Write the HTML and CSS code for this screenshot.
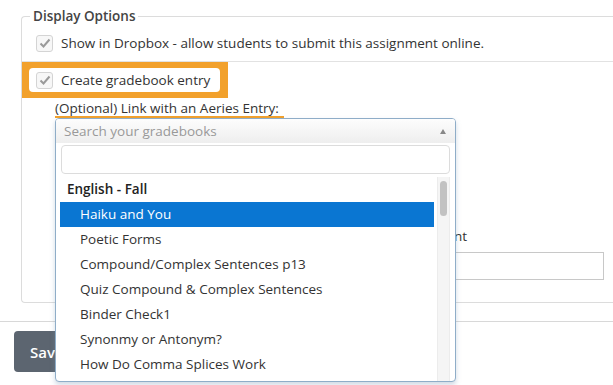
FILE: index.html
```html
<!DOCTYPE html>
<html lang="en">

<head>
  <meta charset="utf-8">
  <title>Display Options</title>
  <link rel="stylesheet" href="styles.css">
</head>

<body>
  <div class="page">
    <fieldset class="options">
      <legend>Display Options</legend>
      <div class="row row-dropbox">
        <span class="check"><svg width="12" height="10" viewBox="0 0 12 10"><path d="M1.5 5.5 L4.5 8.5 L10.5 1.5" fill="none" stroke="#9a9a9a" stroke-width="2"/></svg></span>
        <span>Show in Dropbox - allow students to submit this assignment online.</span>
      </div>
      <div class="highlight">
        <div class="highlight-inner">
          <span class="check"><svg width="12" height="10" viewBox="0 0 12 10"><path d="M1.5 5.5 L4.5 8.5 L10.5 1.5" fill="none" stroke="#9a9a9a" stroke-width="2"/></svg></span>
          <span>Create gradebook entry</span>
        </div>
      </div>
      <div class="link-label"><span>(Optional) Link with an Aeries Entry:</span></div>
      <div class="hidden-row">
        <div class="hidden-label">Display in Aeries as an assignment</div>
        <div class="hidden-input"></div>
      </div>
    </fieldset>
    <div class="footer">
      <button class="save">Save</button>
    </div>

    <div class="dropdown">
      <div class="dropdown-head">
        <span>Search your gradebooks</span>
        <span class="arrow"></span>
      </div>
      <div class="search"></div>
      <div class="list">
        <ul class="items">
          <li class="group">English - Fall</li>
          <li class="item active">Haiku and You</li>
          <li class="item">Poetic Forms</li>
          <li class="item">Compound/Complex Sentences p13</li>
          <li class="item">Quiz Compound &amp; Complex Sentences</li>
          <li class="item">Binder Check1</li>
          <li class="item">Synonmy or Antonym?</li>
          <li class="item">How Do Comma Splices Work</li>
        </ul>
        <div class="scroll"><div class="thumb"></div></div>
      </div>
    </div>
  </div>
</body>

</html>
```

FILE: styles.css
```css
html {
  font-family: 'Open Sans', 'Liberation Sans', sans-serif;
  font-size: 13.5px;
  color: #333;
}

body {
  margin: 0;
  background: #fff;
  overflow: hidden;
}

.page {
  position: relative;
  width: 613px;
  height: 385px;
  padding-top: 7px;
  box-sizing: border-box;
}

.options {
  margin: 0 0 0 21px;
  padding: 0;
  border: 1px solid #dcdcdc;
  border-right: none;
  border-radius: 4px 0 0 4px;
  height: 296px;
  box-sizing: border-box;
  min-width: 0;
}

.options legend {
  margin-left: 8px;
  padding: 0 3px;
  font-weight: 600;
  line-height: 18px;
  color: #444;
}

.row {
  display: flex;
  align-items: center;
}

.row-dropbox {
  height: 36px;
  padding-left: 14px;
  border-bottom: 1px solid #e2e2e2;
}

.check {
  width: 15px;
  height: 15px;
  border: 1px solid #d4d4d4;
  border-radius: 3px;
  background: #f7f7f7;
  display: inline-flex;
  align-items: center;
  justify-content: center;
  margin-right: 8px;
  flex-shrink: 0;
}

.highlight {
  width: 206px;
  height: 36px;
  background: #f2a12c;
  padding: 6px 8px 6px 7px;
  box-sizing: border-box;
}

.highlight-inner {
  height: 24px;
  background: #fff;
  border-radius: 4px;
  display: flex;
  align-items: center;
  padding-left: 7px;
}

.link-label {
  display: flex;
  align-items: flex-start;
  padding: 3px 0 0 33px;
  height: 20px;
}

.link-label span {
  line-height: 15px;
  padding-right: 5px;
  border-bottom: 2px solid #f2a12c;
}

.hidden-row {
  margin-top: 106px;
}

.hidden-label {
  width: 445px;
  text-align: right;
  line-height: 18px;
}

.hidden-input {
  margin: 7px 0 0 433px;
  width: 149px;
  height: 28px;
  border: 1px solid #c8c8c8;
  box-sizing: border-box;
}

.footer {
  margin-top: 18px;
  border-top: 1px solid #d8d8d8;
  padding: 9px 0 0 14px;
}

.save {
  font-family: inherit;
  font-size: 15px;
  font-weight: 600;
  color: #fff;
  background: #5c6570;
  border: none;
  border-radius: 4px;
  height: 41px;
  padding: 0 16px;
}

.dropdown {
  position: absolute;
  left: 55px;
  top: 118px;
  width: 401px;
  height: 264px;
  box-sizing: border-box;
  border: 1px solid #8fadc8;
  border-radius: 4px;
  background: #fff;
  box-shadow: 0 3px 5px rgba(120, 150, 180, 0.35);
  overflow: hidden;
}

.dropdown-head {
  height: 24px;
  display: flex;
  align-items: center;
  justify-content: space-between;
  padding: 0 8px 0 8px;
  color: #999;
  background: linear-gradient(#fdfdfd, #eeeeee);
}

.arrow {
  width: 0;
  height: 0;
  border-left: 3px solid transparent;
  border-right: 3px solid transparent;
  border-bottom: 5px solid #888;
  margin-right: 1px;
}

.search {
  margin: 2px 5px 0 5px;
  height: 27px;
  border: 1px solid #dcdcdc;
  border-radius: 4px;
}

.list {
  display: flex;
  margin: 3px 5px 0 4px;
  height: 210px;
}

.items {
  flex: 1;
  list-style: none;
  margin: 0;
  padding: 0;
}

.items li {
  height: 25px;
  line-height: 25px;
  white-space: nowrap;
}

.group {
  font-weight: 600;
  padding-left: 7px;
  color: #222;
}

.item {
  padding-left: 20px;
  margin-right: 3px;
}

.item.active {
  background: #0a76d2;
  color: #fff;
}

.scroll {
  width: 11px;
  background: #f5f5f5;
  border-left: 1px solid #ececec;
  border-right: 1px solid #ececec;
}

.thumb {
  margin: 4px 2px 0 2px;
  height: 35px;
  background: #c2c2c2;
  border-radius: 4px;
}
```
